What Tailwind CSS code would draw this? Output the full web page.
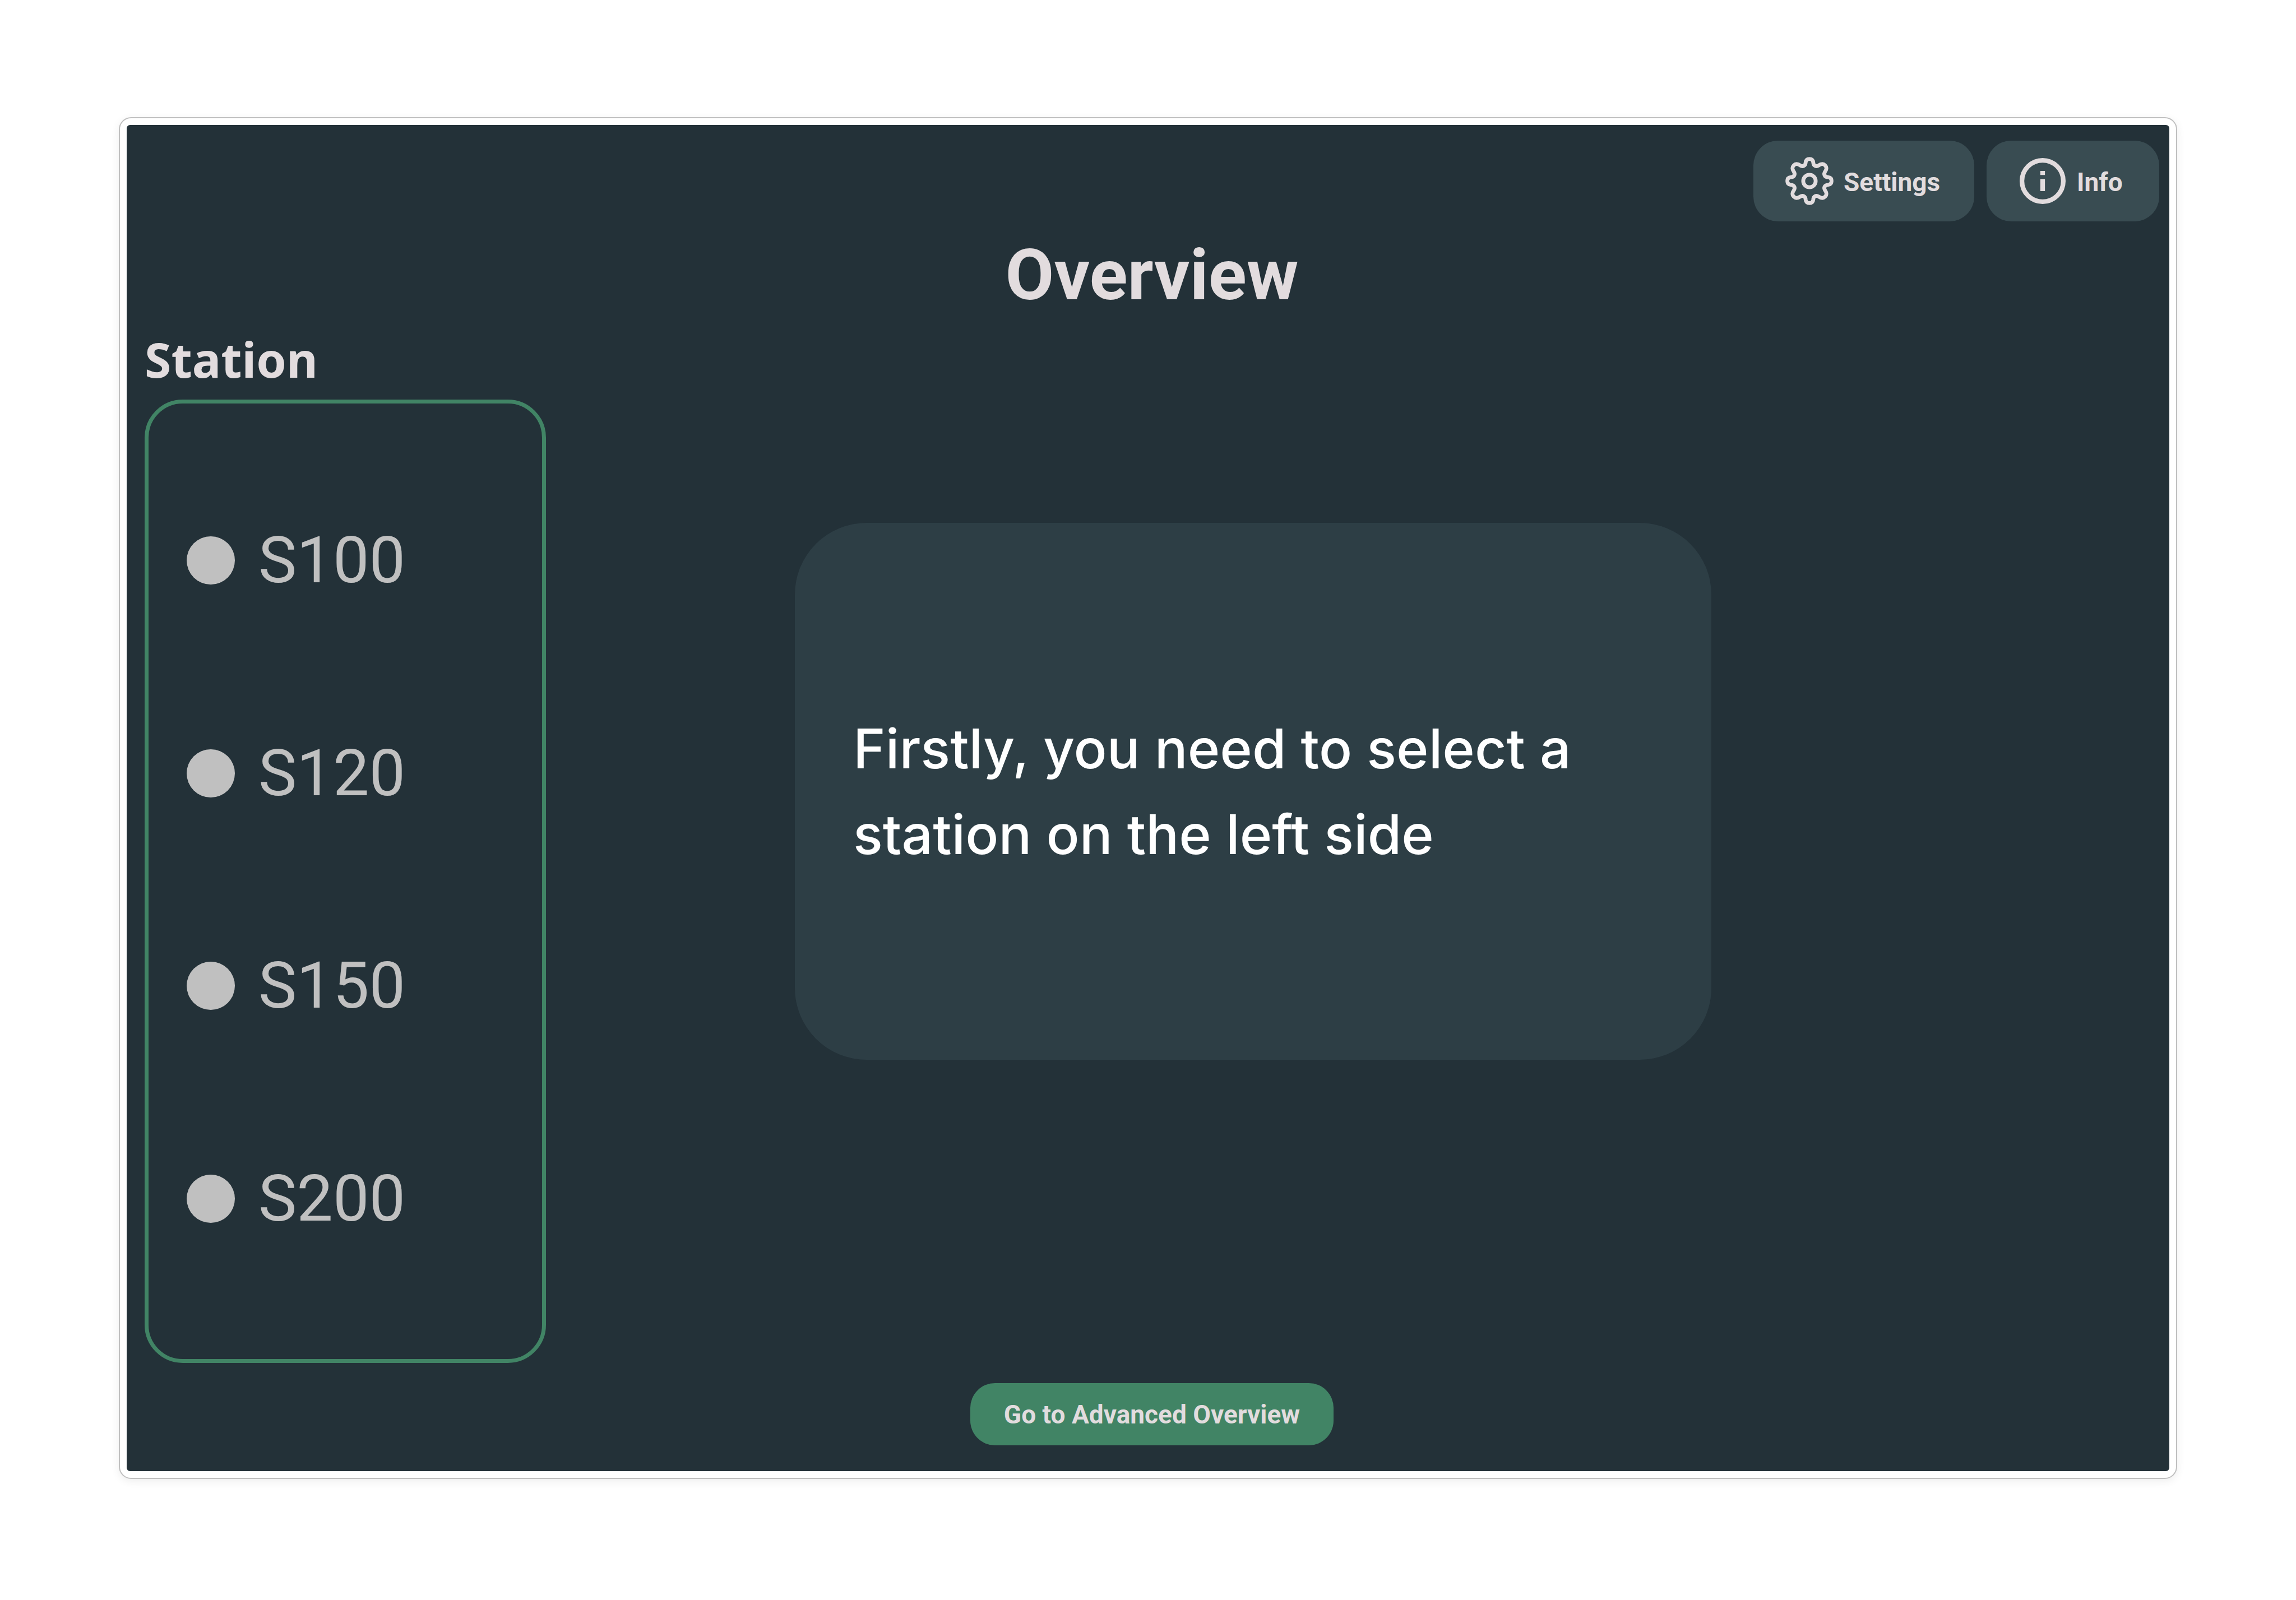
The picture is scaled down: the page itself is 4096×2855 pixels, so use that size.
<!DOCTYPE html>
<html lang="en">
<head>
<meta charset="utf-8">
<title>Overview</title>
<script src="https://cdn.jsdelivr.net/npm/@tailwindcss/browser@4"></script>
</head>
<body class="flex min-h-screen flex-col bg-white px-[212px] pt-[209px] pb-[216px] font-['Roboto',sans-serif] text-[#e2dcde]">
<div class="flex flex-1 flex-col rounded-[22px] border-2 border-[#c0c0c0] bg-white p-3 shadow-[0_4px_16px_rgba(0,0,0,0.07)]">
  <div class="flex flex-1 flex-col rounded-md bg-[#233138] pt-7 pr-[18px] pb-[46px] pl-8">
    <header class="flex justify-end gap-[22px]">
      <button type="button" class="flex h-[144px] w-[394px] items-center gap-[18px] rounded-[44px] bg-[#394c52] pl-[57px] text-[46px] leading-[56px] font-bold">
        <svg class="size-[86px]" viewBox="0 0 24 24" fill="none" stroke="currentColor" stroke-width="1.9" stroke-linejoin="round" aria-hidden="true">
          <path d="M12 1C10.8 1 10.2 1.7 10.1 2.8C10 4.5 8.6 5 7.5 4.3C6.2 3.4 5.2 3.2 4.2 4.2C3.2 5.2 3.4 6.2 4.3 7.5C5 8.6 4.5 10 2.8 10.1C1.7 10.2 1 10.8 1 12C1 13.2 1.7 13.8 2.8 13.9C4.5 14 5 15.4 4.3 16.5C3.4 17.8 3.2 18.8 4.2 19.8C5.2 20.8 6.2 20.6 7.5 19.7C8.6 19 10 19.5 10.1 21.2C10.2 22.3 10.8 23 12 23C13.2 23 13.8 22.3 13.9 21.2C14 19.5 15.4 19 16.5 19.7C17.8 20.6 18.8 20.8 19.8 19.8C20.8 18.8 20.6 17.8 19.7 16.5C19 15.4 19.5 14 21.2 13.9C22.3 13.8 23 13.2 23 12C23 10.8 22.3 10.2 21.2 10.1C19.5 10 19 8.6 19.7 7.5C20.6 6.2 20.8 5.2 19.8 4.2C18.8 3.2 17.8 3.4 16.5 4.3C15.4 5 14 4.5 13.9 2.8C13.8 1.7 13.2 1 12 1Z"/>
          <circle cx="12" cy="12" r="3.1"/>
        </svg>
        <span class="pt-1">Settings</span>
      </button>
      <button type="button" class="flex h-[144px] w-[308px] items-center gap-[18px] rounded-[44px] bg-[#394c52] pl-[57px] text-[46px] leading-[56px] font-bold">
        <svg class="size-[86px]" viewBox="0 0 24 24" fill="none" stroke="currentColor" aria-hidden="true">
          <circle cx="12" cy="12" r="10.3" stroke-width="2.3"/>
          <path d="M12 7V9M12 11V17" stroke-width="2.3"/>
        </svg>
        <span class="pt-1">Info</span>
      </button>
    </header>
    <h1 class="mt-[22px] text-center text-[126px] leading-[148px] font-bold">Overview</h1>
    <h2 id="station" class="mt-6 font-['Noto_Sans',sans-serif] text-[86px] leading-[104px] font-bold">Station</h2>
    <main class="mt-5 flex flex-1 items-start">
      <div role="radiogroup" aria-labelledby="station" class="flex w-[716px] flex-col self-stretch rounded-[68px] border-[7px] border-[#418465] pt-[90px] pb-24 pl-[68px] text-[115px] leading-[136px] text-[#c0c0c0]">
        <label class="flex flex-1 items-center gap-[42px]"><input type="radio" name="station" class="size-[86px] appearance-none rounded-full bg-[#c0c0c0]">S100</label>
        <label class="flex flex-1 items-center gap-[42px]"><input type="radio" name="station" class="size-[86px] appearance-none rounded-full bg-[#c0c0c0]">S120</label>
        <label class="flex flex-1 items-center gap-[42px]"><input type="radio" name="station" class="size-[86px] appearance-none rounded-full bg-[#c0c0c0]">S150</label>
        <label class="flex flex-1 items-center gap-[42px]"><input type="radio" name="station" class="size-[86px] appearance-none rounded-full bg-[#c0c0c0]">S200</label>
      </div>
      <section class="mt-[220px] mr-[799px] ml-[444px] flex h-[958px] flex-1 items-center rounded-[128px] bg-[#2d3e45] px-[104px]">
        <p class="font-['Inter',sans-serif] text-[98px] leading-[153px] font-medium text-white">Firstly, you need to select a station on the left side</p>
      </section>
    </main>
    <footer class="mt-9 flex justify-center">
      <button type="button" class="h-[111px] w-[648px] rounded-[44px] bg-[#418465] text-[46px] leading-[56px] font-bold whitespace-nowrap">Go to Advanced Overview</button>
    </footer>
  </div>
</div>
</body>
</html>
